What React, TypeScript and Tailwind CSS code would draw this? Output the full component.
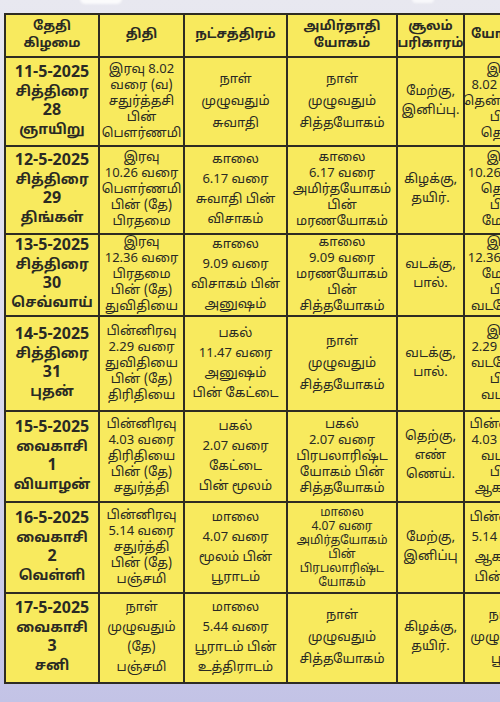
type Row = {
  date: string[];
  thithi: string[];
  star: string[];
  amirtha: string[];
  soolam: string[];
  yogini: string[];
  h: string;
};

const rows: Row[] = [
  {
    date: ["11-5-2025", "சித்திரை", "28", "ஞாயிறு"],
    thithi: ["இரவு 8.02", "வரை (வ)", "சதுர்த்தசி", "பின்", "பௌர்ணமி"],
    star: ["நாள்", "முழுவதும்", "சுவாதி"],
    amirtha: ["நாள்", "முழுவதும்", "சித்தயோகம்"],
    soolam: ["மேற்கு,", "இனிப்பு."],
    yogini: ["இரவு", "8.02 வரை", "தென்மேற்கு", "பின்", "தெற்கு"],
    h: "h-[89px]",
  },
  {
    date: ["12-5-2025", "சித்திரை", "29", "திங்கள்"],
    thithi: ["இரவு", "10.26 வரை", "பௌர்ணமி", "பின் (தே)", "பிரதமை"],
    star: ["காலை", "6.17 வரை", "சுவாதி பின்", "விசாகம்"],
    amirtha: ["காலை", "6.17 வரை", "அமிர்தயோகம்", "பின்", "மரணயோகம்"],
    soolam: ["கிழக்கு,", "தயிர்."],
    yogini: ["இரவு", "10.26 வரை", "தெற்கு", "பின்", "மேற்கு"],
    h: "h-[88px]",
  },
  {
    date: ["13-5-2025", "சித்திரை", "30", "செவ்வாய்"],
    thithi: ["இரவு", "12.36 வரை", "பிரதமை", "பின் (தே)", "துவிதியை"],
    star: ["காலை", "9.09 வரை", "விசாகம் பின்", "அனுஷம்"],
    amirtha: ["காலை", "9.09 வரை", "மரணயோகம்", "பின்", "சித்தயோகம்"],
    soolam: ["வடக்கு,", "பால்."],
    yogini: ["இரவு", "12.36 வரை", "மேற்கு", "பின்", "வடமேற்கு"],
    h: "h-[81px]",
  },
  {
    date: ["14-5-2025", "சித்திரை", "31", "புதன்"],
    thithi: ["பின்னிரவு", "2.29 வரை", "துவிதியை", "பின் (தே)", "திரிதியை"],
    star: ["பகல்", "11.47 வரை", "அனுஷம்", "பின் கேட்டை"],
    amirtha: ["நாள்", "முழுவதும்", "சித்தயோகம்"],
    soolam: ["வடக்கு,", "பால்."],
    yogini: ["இரவு", "2.29 வரை", "வடமேற்கு", "பின்", "வடக்கு"],
    h: "h-[95px]",
  },
  {
    date: ["15-5-2025", "வைகாசி", "1", "வியாழன்"],
    thithi: ["பின்னிரவு", "4.03 வரை", "திரிதியை", "பின் (தே)", "சதுர்த்தி"],
    star: ["பகல்", "2.07 வரை", "கேட்டை", "பின் மூலம்"],
    amirtha: ["பகல்", "2.07 வரை", "பிரபலாரிஷ்ட", "யோகம் பின்", "சித்தயோகம்"],
    soolam: ["தெற்கு,", "எண்", "ணெய்."],
    yogini: ["பின்னிரவு", "4.03 வரை", "வடக்கு", "பின்", "ஆகாயம்"],
    h: "h-[91px]",
  },
  {
    date: ["16-5-2025", "வைகாசி", "2", "வெள்ளி"],
    thithi: ["பின்னிரவு", "5.14 வரை", "சதுர்த்தி", "பின் (தே)", "பஞ்சமி"],
    star: ["மாலை", "4.07 வரை", "மூலம் பின்", "பூராடம்"],
    amirtha: ["மாலை", "4.07 வரை", "அமிர்தயோகம்", "பின்", "பிரபலாரிஷ்ட", "யோகம்"],
    soolam: ["மேற்கு,", "இனிப்பு"],
    yogini: ["பின்னிரவு", "5.14 வரை", "ஆகாயம்", "பின் பூமி"],
    h: "h-[91px]",
  },
  {
    date: ["17-5-2025", "வைகாசி", "3", "சனி"],
    thithi: ["நாள்", "முழுவதும்", "(தே)", "பஞ்சமி"],
    star: ["மாலை", "5.44 வரை", "பூராடம் பின்", "உத்திராடம்"],
    amirtha: ["நாள்", "முழுவதும்", "சித்தயோகம்"],
    soolam: ["கிழக்கு,", "தயிர்."],
    yogini: ["நாள்", "முழுவதும்", "பூமி"],
    h: "h-[90px]",
  },
];

// line spacing depends on how many lines a cell holds
const leadFor = (n: number) => {
  if (n <= 2) return "leading-[20px]";
  if (n === 3) return "leading-[22px]";
  if (n === 4) return "leading-[20px]";
  if (n === 5) return "leading-[16px]";
  return "leading-[14px] text-[12px]";
};

const Lines = ({ lines, className = "" }: { lines: string[]; className?: string }) => (
  <div className={`flex flex-col items-center justify-center whitespace-nowrap ${leadFor(lines.length)} ${className}`}>
    {lines.map((l, i) => (
      <span key={i}>{l}</span>
    ))}
  </div>
);

const cell = "border-2 border-[#2e2c22] bg-[#f8ea5e] p-0 align-middle text-center overflow-hidden";

export default function App() {
  return (
    <div
      className="relative w-[500px] h-[702px] overflow-hidden bg-gradient-to-b from-[#e8e8f0] via-[#dcdcee] to-[#c3c3e6] text-[#2a2a24]"
      style={{ fontFamily: '"Noto Sans Tamil", "Lohit Tamil", "Latha", "Liberation Sans", "Noto Sans", sans-serif' }}
    >
      <div className="absolute left-[80px] top-[-6px] w-[42px] h-[10px] rounded-full bg-white/80 blur-[1px]" />
      <div className="absolute left-[412px] top-[-5px] w-[22px] h-[8px] rounded-full bg-white/70 blur-[1px]" />
      <div className="pt-[13px] pl-[4px]">
        <table className="table-fixed border-collapse w-[540px]">
          <colgroup>
            <col className="w-[94px]" />
            <col className="w-[85px]" />
            <col className="w-[103px]" />
            <col className="w-[110px]" />
            <col className="w-[67px]" />
            <col className="w-[81px]" />
          </colgroup>
          <thead>
            <tr className="h-[43px] text-[13px] font-bold">
              <th className={cell}>
                <Lines lines={["தேதி", "கிழமை"]} className="!leading-[17px]" />
              </th>
              <th className={cell}>திதி</th>
              <th className={cell}>நட்சத்திரம்</th>
              <th className={cell}>
                <Lines lines={["அமிர்தாதி", "யோகம்"]} className="!leading-[17px]" />
              </th>
              <th className={cell}>
                <Lines lines={["சூலம்", "பரிகாரம்"]} className="!leading-[17px]" />
              </th>
              <th className={`${cell} text-left pl-[6px]`}>யோகினி</th>
            </tr>
          </thead>
          <tbody>
            {rows.map((r) => (
              <tr key={r.date[0]} className={r.h}>
                <td className={cell}>
                  <div className="flex flex-col items-center font-bold leading-[19px]">
                    <span className="text-[16px]">{r.date[0]}</span>
                    <span className="text-[14px]">{r.date[1]}</span>
                    <span className="text-[16px]">{r.date[2]}</span>
                    <span className="text-[14px]">{r.date[3]}</span>
                  </div>
                </td>
                <td className={`${cell} text-[13px]`}>
                  <Lines lines={r.thithi} />
                </td>
                <td className={`${cell} text-[13px]`}>
                  <Lines lines={r.star} />
                </td>
                <td className={`${cell} text-[13px]`}>
                  <Lines lines={r.amirtha} />
                </td>
                <td className={`${cell} text-[13px]`}>
                  <Lines lines={r.soolam} className="!leading-[19px]" />
                </td>
                <td className={`${cell} text-[13px]`}>
                  <Lines lines={r.yogini} />
                </td>
              </tr>
            ))}
          </tbody>
        </table>
      </div>
    </div>
  );
}
